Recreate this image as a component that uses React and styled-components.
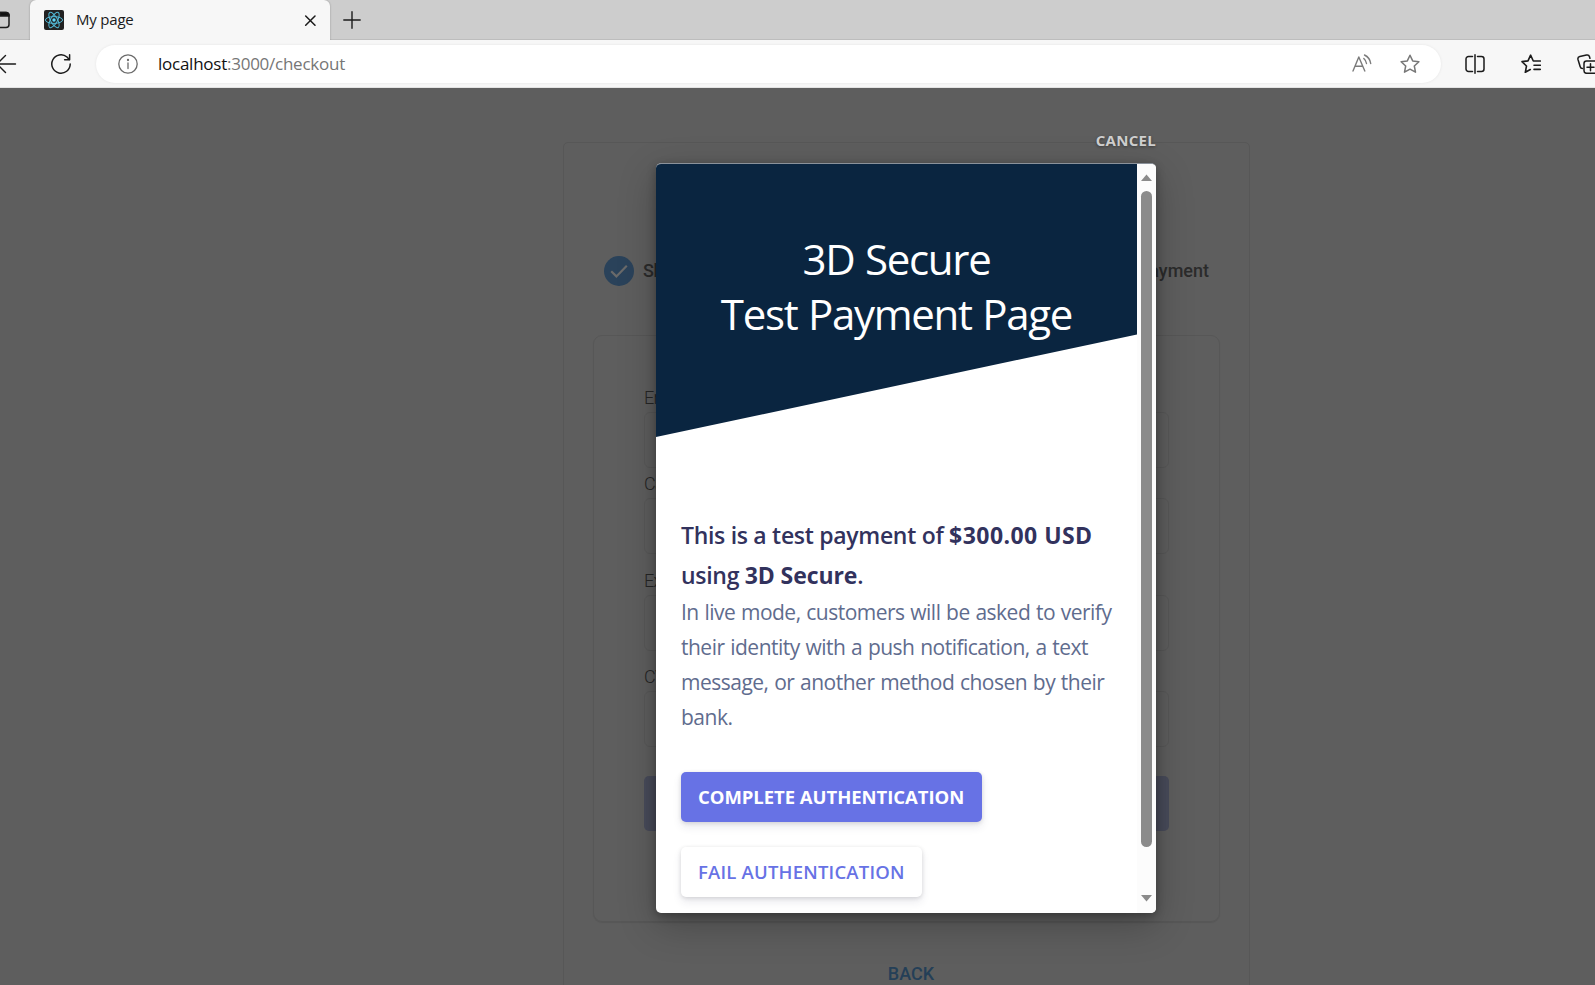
import React from 'react';
import styled, { createGlobalStyle } from 'styled-components';

const Global = createGlobalStyle`
  *, *::before, *::after { box-sizing: border-box; }
  body { margin: 0; font-family: "Open Sans", "Noto Sans", sans-serif; }
  h1, h2, p { margin: 0; }
  button { font: inherit; border: 0; padding: 0; background: none; }
  svg { display: block; flex: none; }
`;

const Window = styled.div`
  width: 1595px;
  height: 985px;
  display: flex;
  flex-direction: column;
  overflow: hidden;
  background: #5e5e5e;
`;

/* Browser chrome */
const TabStrip = styled.div`
  height: 40px;
  flex: none;
  display: flex;
  align-items: stretch;
  background: #cdcdcd;
  box-shadow: inset 0 -1px 0 #bdbdbd;
`;
const TabMenu = styled.div`
  width: 30px;
  display: flex;
  align-items: center;
`;
const Tab = styled.div`
  width: 300px;
  padding: 0 13px 0 14px;
  display: flex;
  align-items: center;
  background: #f7f7f7;
  border-radius: 6px 6px 0 0;
  box-shadow: 0 0 2px rgba(0, 0, 0, 0.3);
  clip-path: inset(0 -3px 0 -3px);
`;
const TabTitle = styled.span`
  flex: 1;
  margin: -2px 0 0 12px;
  font-size: 15px;
  line-height: 20px;
  letter-spacing: -0.2px;
  color: #1b1b1b;
`;
const NewTab = styled.div`
  display: flex;
  align-items: center;
  padding-left: 13px;
`;
const Toolbar = styled.div`
  height: 48px;
  flex: none;
  display: flex;
  align-items: center;
  overflow: hidden;
  background: #f7f7f7;
  border-bottom: 1px solid #e3e3e3;
`;
const NavButtons = styled.div`
  width: 96px;
  flex: none;
  display: flex;
  align-items: center;
  gap: 34px;
`;
const AddressBar = styled.div`
  width: 1345px;
  flex: none;
  height: 38px;
  padding: 0 21px 0 22px;
  display: flex;
  align-items: center;
  border-radius: 19px;
  background: #fff;
  box-shadow: 0 0 3px rgba(0, 0, 0, 0.08);
`;
const Url = styled.span`
  flex: 1;
  margin-left: 20px;
  font-size: 17px;
  line-height: 24px;
  letter-spacing: -0.25px;
  color: #767676;
`;
const Host = styled.span`
  color: #111;
`;
const AddressActions = styled.div`
  display: flex;
  align-items: center;
  gap: 28px;
`;
const ToolbarActions = styled.div`
  flex: none;
  display: flex;
  align-items: center;
  gap: 36px;
  margin-left: 24px;
`;

/* Checkout page */
const Page = styled.main`
  position: relative;
  flex: 1;
  min-height: 0;
  padding: 54px 345px 0 563px;
  overflow: hidden;
  font-family: Roboto, "Open Sans", sans-serif;
`;
const CheckoutCard = styled.section`
  height: 900px;
  padding: 112px 29px 0;
  border: 1px solid #575757;
  border-radius: 5px;
`;
const Stepper = styled.div`
  height: 32px;
  padding: 0 11px;
  display: flex;
  align-items: center;
  justify-content: space-between;
`;
const Step = styled.div`
  display: flex;
  align-items: center;
  gap: 9px;
  font-size: 18px;
  font-weight: 500;
  line-height: 26px;
  letter-spacing: ${(p) => p.$spacing || 0}px;
  color: #2b2b2b;
`;
const FormCard = styled.div`
  height: 587px;
  margin-top: 48px;
  padding: 49px 50px 0;
  border: 1px solid #575757;
  border-radius: 9px;
  box-shadow: 0 1px 1px rgba(0, 0, 0, 0.08);
`;
const Field = styled.div`
  height: ${(p) => p.$height}px;
  display: flex;
  flex-direction: column;
`;
const Label = styled.label`
  height: 27px;
  font-size: 18px;
  font-weight: 300;
  line-height: 26px;
  letter-spacing: -0.8px;
  color: #262626;
`;
const Input = styled.div`
  height: 56px;
  border: 1px solid #585858;
  border-radius: 6px;
`;
const PayButton = styled.div`
  height: 55px;
  border-radius: 5px;
  background: #484b5a;
`;
const BackButton = styled.button`
  width: 100%;
  height: 48px;
  margin-top: 28px;
  padding-left: 9px;
  font-size: 18px;
  font-weight: 500;
  line-height: 48px;
  color: #243f57;
`;

/* Authentication dialog, laid over the checkout page */
const Overlay = styled.div`
  position: absolute;
  inset: 0;
  padding: 41px 0 0 656px;
  display: flex;
  flex-direction: column;
  font-family: "Open Sans", "Noto Sans", sans-serif;
`;
const CancelButton = styled.button`
  width: 500px;
  height: 22px;
  margin-bottom: 12px;
  text-align: right;
  font-size: 15px;
  font-weight: 700;
  line-height: 21px;
  letter-spacing: 0.3px;
  color: #cfcfcf;
  text-shadow: 0 1px 3px rgba(0, 0, 0, 0.4);
`;
const Dialog = styled.div`
  width: 500px;
  height: 750px;
  display: flex;
  overflow: hidden;
  border-radius: 5px;
  border-top: 1px solid #8b929b;
  background: #fff;
  box-shadow: 0 12px 38px rgba(0, 0, 0, 0.24), 0 3px 10px rgba(0, 0, 0, 0.3);
`;
const DialogBody = styled.div`
  width: 481px;
  display: flex;
  flex-direction: column;
`;
const Banner = styled.header`
  height: 273px;
  padding-top: 67px;
  background: #0a2540;
  clip-path: polygon(0 0, 100% 0, 100% 170.5px, 0 100%);
`;
const BannerTitle = styled.h1`
  text-align: center;
  font-size: 42px;
  font-weight: 400;
  line-height: 55px;
  letter-spacing: ${-1.3}px;
  word-spacing: 1px;
  color: #fff;
`;
const Message = styled.div`
  padding: 78px 0 0 25px;
`;
const Summary = styled.h2`
  font-size: 23px;
  font-weight: 600;
  line-height: 40px;
  letter-spacing: -0.3px;
  color: #32325d;
`;
const Strong = styled.strong`
  font-weight: 700;
  letter-spacing: ${(p) => p.$spacing}px;
`;
const Note = styled.p`
  font-size: 21px;
  line-height: 35px;
  letter-spacing: -0.5px;
  word-spacing: 0.7px;
  color: #5f6c8e;
`;
const Actions = styled.div`
  margin-top: 37px;
  padding-left: 25px;
  display: flex;
  flex-direction: column;
  align-items: flex-start;
  gap: 25px;
`;
const ActionButton = styled.button`
  width: ${(p) => p.$width}px;
  height: 50px;
  padding-left: 17px;
  text-align: left;
  border-radius: 5px;
  font-size: 18.5px;
  font-weight: ${(p) => (p.$primary ? 700 : 600)};
  line-height: 50px;
  letter-spacing: ${(p) => (p.$primary ? -0.05 : 0.2)}px;
  white-space: nowrap;
  color: ${(p) => (p.$primary ? '#fff' : '#6772e5')};
  background: ${(p) => (p.$primary ? '#6772e5' : '#fff')};
  box-shadow: 0 5px 9px rgba(50, 50, 93, 0.1), 0 1px 4px rgba(0, 0, 0, 0.13);
`;
const Scrollbar = styled.div`
  width: 19px;
  padding: 10px 0 11px;
  display: flex;
  flex-direction: column;
  align-items: center;
  background: #fcfcfc;
`;
const Thumb = styled.div`
  width: 11px;
  height: 656px;
  margin: 10px 0 auto;
  border-radius: 6px;
  background: #8b8b8b;
`;

const Stroke = ({ w = 20, h = 20, color = '#1b1b1b', sw = 1.4, children }) => (
  <svg width={w} height={h} viewBox={`0 0 ${w} ${h}`} fill="none" stroke={color} strokeWidth={sw} strokeLinecap="round" strokeLinejoin="round">
    {children}
  </svg>
);

const WorkspaceIcon = () => (
  <Stroke w={10} h={18} sw={1.5}>
    <path d="M0 16.500h6a3 3 0 0 0 3-3V4a3 3 0 0 0-3-2.500H0" />
    <path d="M0 1.500h6a3 3 0 0 1 3 3.500H0z" fill="#111" />
  </Stroke>
);
const ReactLogo = () => (
  <svg width="20" height="20" viewBox="0 0 20 20">
    <rect width="20" height="20" rx="2" fill="#222" />
    <g fill="none" stroke="#53b9d6" strokeWidth="1">
      <ellipse cx="10" cy="10" rx="8.600" ry="3.400" />
      <ellipse cx="10" cy="10" rx="8.600" ry="3.400" transform="rotate(60 10 10)" />
      <ellipse cx="10" cy="10" rx="8.600" ry="3.400" transform="rotate(120 10 10)" />
    </g>
    <circle cx="10" cy="10" r="1.700" fill="#61dafb" />
  </svg>
);
const CloseIcon = () => (
  <Stroke w={13} h={11} sw={1.500}><path d="M1.700 1l9.300 9.300M11 1l-9.300 9.300" /></Stroke>
);
const PlusIcon = () => (
  <Stroke w={18} h={18}><path d="M9 .8v16.400M.8 9h16.400" /></Stroke>
);
const BackIcon = () => (
  <Stroke w={17} h={20}><path d="M15.500 10H-2M5.500 1.500L-3 10l8.500 8.500" /></Stroke>
);
const ReloadIcon = () => (
  <Stroke w={20} h={20} sw={1.500}>
    <path d="M19.200 10a9.200 9.200 0 1 1-3.200-7l2.200 2.500" />
    <path d="M18.600 .8v5h-5" />
  </Stroke>
);
const InfoIcon = () => (
  <Stroke color="#6b6b6b" sw={1.300}>
    <circle cx="10" cy="10" r="9.200" />
    <path d="M10 9v5.500" />
    <circle cx="10" cy="6" r=".5" fill="#6b6b6b" />
  </Stroke>
);
const ReadAloudIcon = () => (
  <Stroke color="#7b7b7b" sw={1.400}>
    <path d="M1 17L6.800 3l6 14M3 12.300h7.600M11.800 4.500a8 8 0 0 1 2.700 5M12.500 1a11 11 0 0 1 6.200 8.500" />
  </Stroke>
);
const STAR = 'M10 1.200l2.700 5.700 6.200.8-4.600 4.300 1.200 6.200L10 15.200l-5.500 3 1.200-6.200L1.100 7.700l6.200-.8z';
const StarIcon = () => (
  <Stroke color="#777" sw={1.500}><path d={STAR} /></Stroke>
);
const SplitIcon = () => (
  <Stroke sw={1.500}>
    <path d="M7.500 2.500h-4a2.500 2.500 0 0 0-2.500 2.500v10a2.500 2.500 0 0 0 2.500 2.500h4M12.500 2.500h4a2.500 2.500 0 0 1 2.500 2.500v10a2.500 2.500 0 0 1-2.500 2.500h-4M10 .8v18.400" />
  </Stroke>
);
const FavoritesIcon = () => (
  <Stroke sw={1.600}>
    <path d="M19.300 7h-7L9.600 1.200 7 6.900 1 7.600l4.500 4.400-1.200 6.300 5-2.800M13 11.200h6.300M13 15.400h6.300" />
  </Stroke>
);
const CollectionsIcon = () => (
  <Stroke sw={1.500}>
    <path d="M5.500 14.500a2.500 2.500 0 0 1-2.300-1.800L1 5.500A2.500 2.500 0 0 1 2.800 2.500L9.500 1a2.500 2.500 0 0 1 3 1.800l.4 1.500" />
    <rect x="7" y="7" width="14" height="12.300" rx="2.500" />
    <path d="M13.500 9.700v7M10 13.200h7" />
  </Stroke>
);
const DoneIcon = () => (
  <svg width="30" height="30" viewBox="0 0 30 30">
    <circle cx="15" cy="15" r="15" fill="#2a425a" />
    <path d="M7.200 15.200l5.200 5.200L22.800 9.800" fill="none" stroke="#6a6a6a" strokeWidth="2.200" />
  </svg>
);
const ScrollArrow = ({ down }) => (
  <svg width="11" height="7" viewBox="0 0 11 7">
    <path d={down ? 'M0 0h11L5.500 6.500z' : 'M0 7h11L5.500 .5z'} fill="#8b8b8b" />
  </svg>
);

const fields = [
  { label: 'Enter your name', height: 86 },
  { label: 'Card number', height: 97 },
  { label: 'Expiration date', height: 96 },
  { label: 'CVC', height: 112 },
];

export default function App() {
  return (
    <Window>
      <Global />
      <TabStrip>
        <TabMenu><WorkspaceIcon /></TabMenu>
        <Tab>
          <ReactLogo />
          <TabTitle>My page</TabTitle>
          <CloseIcon />
        </Tab>
        <NewTab><PlusIcon /></NewTab>
      </TabStrip>
      <Toolbar>
        <NavButtons>
          <BackIcon />
          <ReloadIcon />
        </NavButtons>
        <AddressBar>
          <InfoIcon />
          <Url><Host>localhost</Host>:3000/checkout</Url>
          <AddressActions>
            <ReadAloudIcon />
            <StarIcon />
          </AddressActions>
        </AddressBar>
        <ToolbarActions>
          <SplitIcon />
          <FavoritesIcon />
          <CollectionsIcon />
        </ToolbarActions>
      </Toolbar>
      <Page>
        <CheckoutCard>
          <Stepper>
            <Step $spacing={-0.5}><DoneIcon />Shipping</Step>
            <Step>Payment</Step>
          </Stepper>
          <FormCard>
            {fields.map((f) => (
              <Field key={f.label} $height={f.height}>
                <Label>{f.label}</Label>
                <Input />
              </Field>
            ))}
            <PayButton />
          </FormCard>
          <BackButton>BACK</BackButton>
        </CheckoutCard>
        <Overlay>
          <CancelButton>CANCEL</CancelButton>
          <Dialog>
            <DialogBody>
              <Banner>
                <BannerTitle>3D Secure<br />Test Payment Page</BannerTitle>
              </Banner>
              <Message>
                <Summary>
                  This is a test payment of <Strong $spacing={0.45}>$300.00 USD</Strong>
                  <br />
                  using <Strong $spacing={-0.1}>3D Secure</Strong>.
                </Summary>
                <Note>
                  In live mode, customers will be asked to verify<br />
                  their identity with a push notification, a text<br />
                  message, or another method chosen by their<br />
                  bank.
                </Note>
              </Message>
              <Actions>
                <ActionButton $primary $width={301}>COMPLETE AUTHENTICATION</ActionButton>
                <ActionButton $width={241}>FAIL AUTHENTICATION</ActionButton>
              </Actions>
            </DialogBody>
            <Scrollbar>
              <ScrollArrow />
              <Thumb />
              <ScrollArrow down />
            </Scrollbar>
          </Dialog>
        </Overlay>
      </Page>
    </Window>
  );
}
